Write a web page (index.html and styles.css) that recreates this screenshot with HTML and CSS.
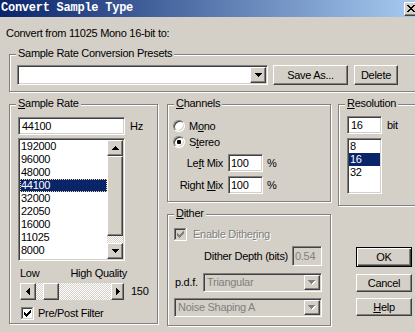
FILE: index.html
```html
<!DOCTYPE html>
<html lang="en">
<head>
<meta charset="utf-8">
<title>Convert Sample Type</title>
<link rel="stylesheet" href="styles.css">
</head>
<body>
<div class="window">
  <div class="titlebar">
    <span class="title">Convert Sample Type</span>
    <span class="close raised"><svg width="8" height="7" viewBox="0 0 8 7"><path fill="#000" d="M0 0h2v1H0zM6 0h2v1H6zM1 1h2v1H1zM5 1h2v1H5zM2 2h4v1H2zM3 3h2v1H3zM2 4h4v1H2zM1 5h2v1H1zM5 5h2v1H5zM0 6h2v1H0zM6 6h2v1H6z"/></svg></span>
  </div>

  <div class="intro">Convert from 11025 Mono 16-bit to:</div>

  <fieldset class="group presets">
    <legend>Sample Rate Conversion Presets</legend>
    <div class="gbody presets-body">
      <div class="combo sunken preset-combo">
        <span class="combo-val"></span>
        <span class="drop raised"><svg width="7" height="4" viewBox="0 0 7 4"><path fill="#000" d="M0 0h7v1H0zM1 1h5v1H1zM2 2h3v1H2zM3 3h1v1H3z"/></svg></span>
      </div>
      <div class="btn raised save">Save As...</div>
      <div class="btn raised del">Delete</div>
    </div>
  </fieldset>

  <div class="lower">
    <fieldset class="group rate">
      <legend><u>S</u>ample Rate</legend>
      <div class="gbody">
        <div class="edit-row">
          <div class="edit sunken rate-edit">44100</div>
          <span class="unit">Hz</span>
        </div>
        <div class="list sunken rate-list">
          <div class="items">
            <div class="item">192000</div>
            <div class="item">96000</div>
            <div class="item">48000</div>
            <div class="item sel focus">44100</div>
            <div class="item">32000</div>
            <div class="item">22050</div>
            <div class="item">16000</div>
            <div class="item">11025</div>
            <div class="item">8000</div>
            <div class="item">6000</div>
          </div>
          <div class="vscroll">
            <span class="sbtn raised"><svg width="7" height="4" viewBox="0 0 7 4"><path fill="#000" d="M3 0h1v1H3zM2 1h3v1H2zM1 2h5v1H1zM0 3h7v1H0z"/></svg></span>
            <span class="vthumb raised"></span>
            <span class="track"></span>
            <span class="sbtn raised"><svg width="7" height="4" viewBox="0 0 7 4"><path fill="#000" d="M0 0h7v1H0zM1 1h5v1H1zM2 2h3v1H2zM3 3h1v1H3z"/></svg></span>
          </div>
        </div>
        <div class="ql"><span>Low</span><span>High Quality</span></div>
        <div class="slider-row">
          <div class="hscroll">
            <span class="sbtn raised left"><svg width="4" height="7" viewBox="0 0 4 7"><path fill="#000" d="M3 0h1v7H3zM2 1h1v5H2zM1 2h1v3H1zM0 3h1v1H0z"/></svg></span>
            <span class="gap"></span>
            <span class="hthumb raised"></span>
            <span class="track"></span>
            <span class="sbtn raised right"><svg width="4" height="7" viewBox="0 0 4 7"><path fill="#000" d="M0 0h1v7H0zM1 1h1v5H1zM2 2h1v3H2zM3 3h1v1H3z"/></svg></span>
          </div>
          <span class="val">150</span>
        </div>
        <div class="chk-row">
          <svg class="chk" width="13" height="13" viewBox="0 0 13 13"><path fill="#808080" d="M0 0h12v1H1v11H0z"/><path fill="#fff" d="M12 0h1v13H0v-1h12z"/><path fill="#404040" d="M1 1h10v1H2v9H1z"/><path fill="#d4d0c8" d="M11 1h1v11H1v-1h10z"/><rect x="2" y="2" width="9" height="9" fill="#fff"/><path fill="#000" d="M9 3h1v1H9zM8 4h2v1H8zM3 5h1v1H3zM7 5h3v1H7zM3 6h2v1H3zM6 6h3v1H6zM3 7h5v1H3zM4 8h3v1H4zM5 9h1v1H5z"/></svg>
          <span class="lbl">Pre/Post Filter</span>
        </div>
      </div>
    </fieldset>

    <fieldset class="group channels">
      <legend><u>C</u>hannels</legend>
      <div class="gbody">
        <div class="radio-row"><span class="radio"></span><span class="lbl">M<u>o</u>no</span></div>
        <div class="radio-row"><span class="radio on"></span><span class="lbl">S<u>t</u>ereo</span></div>
        <div class="mix-row first">
          <span class="mix-label">Le<u>f</u>t Mix</span>
          <div class="edit sunken mix-edit">100</div>
          <span class="pct">%</span>
        </div>
        <div class="mix-row">
          <span class="mix-label">Right <u>M</u>ix</span>
          <div class="edit sunken mix-edit">100</div>
          <span class="pct">%</span>
        </div>
      </div>
    </fieldset>

    <fieldset class="group resolution">
      <legend><u>R</u>esolution</legend>
      <div class="gbody">
        <div class="edit-row">
          <div class="edit sunken res-edit">16</div>
          <span class="unit">bit</span>
        </div>
        <div class="list sunken res-list">
          <div class="items">
            <div class="item">8</div>
            <div class="item sel">16</div>
            <div class="item">32</div>
          </div>
        </div>
      </div>
    </fieldset>

    <fieldset class="group dither">
      <legend><u>D</u>ither</legend>
      <div class="gbody">
        <div class="chk-row">
          <svg class="chk" width="13" height="13" viewBox="0 0 13 13"><path fill="#808080" d="M0 0h12v1H1v11H0z"/><path fill="#fff" d="M12 0h1v13H0v-1h12z"/><path fill="#404040" d="M1 1h10v1H2v9H1z"/><path fill="#d4d0c8" d="M11 1h1v11H1v-1h10z"/><rect x="2" y="2" width="9" height="9" fill="#d4d0c8"/><path fill="#808080" d="M9 3h1v1H9zM8 4h2v1H8zM3 5h1v1H3zM7 5h3v1H7zM3 6h2v1H3zM6 6h3v1H6zM3 7h5v1H3zM4 8h3v1H4zM5 9h1v1H5z"/></svg>
          <span class="lbl disabled">Enable Dithe<u>r</u>ing</span>
        </div>
        <div class="depth-row">
          <span class="dl">Dither Depth (bits)</span>
          <div class="edit sunken depth-edit">0.54</div>
        </div>
        <div class="pdf-row">
          <span class="pdf-label">p.d.f.</span>
          <div class="combo sunken dis">
            <span class="combo-val">Triangular</span>
            <span class="drop raised"><svg width="8" height="5" viewBox="0 0 8 5"><path fill="#fff" d="M1 1h7v1H1zM2 2h5v1H2zM3 3h3v1H3zM4 4h1v1H4z"/><path fill="#808080" d="M0 0h7v1H0zM1 1h5v1H1zM2 2h3v1H2zM3 3h1v1H3z"/></svg></span>
          </div>
        </div>
        <div class="combo sunken dis noise">
          <span class="combo-val">Noise Shaping A</span>
          <span class="drop raised"><svg width="8" height="5" viewBox="0 0 8 5"><path fill="#fff" d="M1 1h7v1H1zM2 2h5v1H2zM3 3h3v1H3zM4 4h1v1H4z"/><path fill="#808080" d="M0 0h7v1H0zM1 1h5v1H1zM2 2h3v1H2zM3 3h1v1H3z"/></svg></span>
        </div>
      </div>
    </fieldset>

    <div class="actions">
      <div class="btn ok">OK</div>
      <div class="btn raised cancel">Cancel</div>
      <div class="btn raised help"><span><u>H</u>elp</span></div>
    </div>
  </div>
</div>
</body>
</html>
```

FILE: styles.css
```css
* { box-sizing: border-box; }
html, body { margin: 0; padding: 0; }
body {
  width: 415px;
  height: 332px;
  overflow: hidden;
  background: #d4d0c8;
  color: #000;
  font-family: "Liberation Sans", Arial, sans-serif;
  font-size: 11px;
  line-height: 13px;
  letter-spacing: -0.28px;
}
u { text-decoration: underline; text-underline-offset: 1px; }
.window { width: 415px; }

/* title bar */
.titlebar {
  display: flex;
  justify-content: space-between;
  align-items: flex-start;
  height: 17px;
  padding-left: 1px;
  background: linear-gradient(to right, #0a246a 0%, #a6caf0 100%);
}
.title {
  font-family: "Liberation Mono", monospace;
  font-weight: bold;
  font-size: 12px;
  line-height: 17px;
  letter-spacing: -0.25px;
  color: #fff;
  white-space: nowrap;
}
.close {
  flex-shrink: 0;
  width: 16px;
  height: 14px;
  margin-top: 2px;
  margin-right: -5px;
  padding: 2px 0 0 2px;
  display: flex;
}
.close svg { display: block; }

/* 3D edges */
.raised {
  background: #d4d0c8;
  border: 1px solid;
  border-color: #fff #404040 #404040 #fff;
  box-shadow: inset -1px -1px #808080, inset 1px 1px #d4d0c8;
}
.sunken {
  border: 1px solid;
  border-color: #808080 #fff #fff #808080;
  box-shadow: inset 1px 1px #404040, inset -1px -1px #d4d0c8;
  padding: 1px;
}

.intro { margin: 10px 0 0 6px; white-space: nowrap; }

/* group boxes */
.group {
  margin: 0;
  padding: 0;
  min-width: 0;
  border: 1px solid #808080;
  box-shadow: inset 1px 1px #fff, 1px 1px #fff;
}
.group > legend {
  margin-left: 6px;
  padding: 0 2px 2px;
  line-height: 13px;
  background: #d4d0c8;
  white-space: nowrap;
}

/* presets */
.presets { width: 420px; margin: 7px 0 0 9px; }
.presets-body { display: flex; padding: 3px 0 6px 7px; }
.combo { display: flex; height: 20px; background: #fff; }
.combo-val { flex: 1; padding-left: 2px; line-height: 16px; white-space: nowrap; overflow: hidden; }
.drop { flex-shrink: 0; width: 16px; display: flex; align-items: center; justify-content: center; }
.drop svg, .sbtn svg { display: block; }
.preset-combo { width: 251px; }
.btn { display: flex; align-items: center; justify-content: center; white-space: nowrap; }
.save { width: 75px; height: 20px; margin-left: 5px; }
.del { width: 44px; height: 20px; margin-left: 6px; }

/* lower area */
.lower {
  display: grid;
  grid-template-columns: 158px 171px 1fr;
  grid-template-rows: 110px auto;
  align-items: start;
  margin: 5px 0 0 9px;
}

/* sample rate */
.rate { grid-row: 1 / span 2; grid-column: 1; width: 149px; }
.rate .gbody { padding: 5px 0 3px 8px; }
.edit-row { display: flex; align-items: center; }
.edit {
  height: 18px;
  background: #fff;
  padding: 1px 1px 1px 3px;
  line-height: 14px;
  white-space: nowrap;
  overflow: hidden;
}
.rate-edit { width: 107px; }
.unit { margin-left: 5px; }
.list { display: flex; background: #fff; margin-top: 3px; }
.rate-list { width: 107px; height: 123px; }
.items { flex: 1; overflow: hidden; }
.item { height: 13px; line-height: 13px; padding-left: 1px; white-space: nowrap; }
.item.sel { background: #0a246a; color: #fff; }
.item.focus { outline: 1px dotted #f5db95; outline-offset: -1px; }
.vscroll, .hscroll {
  background: repeating-conic-gradient(#fff 0 25%, #d4d0c8 0 50%) 0 0 / 2px 2px;
}
.vscroll { width: 16px; display: flex; flex-direction: column; flex-shrink: 0; }
.sbtn { flex-shrink: 0; display: flex; align-items: center; justify-content: center; }
.vscroll .sbtn { height: 16px; }
.vthumb { height: 80px; flex-shrink: 0; }
.track { flex: 1; }
.ql { display: flex; justify-content: space-between; width: 107px; margin: 6px 0 0 2px; white-space: nowrap; }
.slider-row { display: flex; align-items: center; height: 17px; margin: 3px 0 0 2px; }
.hscroll { width: 104px; height: 17px; display: flex; }
.hscroll .left { width: 16px; }
.hscroll .gap { width: 7px; flex-shrink: 0; }
.hthumb { width: 16px; flex-shrink: 0; }
.hscroll .right { width: 13px; }
.val { margin-left: 7px; }
.chk-row { display: flex; align-items: center; height: 13px; white-space: nowrap; }
.chk { display: block; flex-shrink: 0; }
.rate .chk-row { margin: 7px 0 0 3px; }
.rate .chk-row .lbl { margin-left: 4px; }

/* channels */
.channels { grid-row: 1; grid-column: 2; width: 164px; }
.channels .gbody { padding: 8px 0 7px 5px; }
.radio-row { display: flex; align-items: center; height: 12px; line-height: 12px; }
.radio-row + .radio-row { margin-top: 4px; }
.radio {
  flex-shrink: 0;
  width: 12px;
  height: 12px;
  border-radius: 50%;
  background: #fff;
  border: 1px solid;
  border-color: #808080 #fff #fff #808080;
  box-shadow: inset 1px 1px #404040, inset -1px -1px #d4d0c8;
  display: flex;
  align-items: center;
  justify-content: center;
}
.radio.on::after { content: ""; width: 4px; height: 4px; border-radius: 1px; background: #000; }
.radio-row .lbl { margin-left: 4px; }
.mix-row { display: flex; align-items: center; height: 18px; margin-top: 4px; white-space: nowrap; }
.mix-row.first { margin-top: 6px; }
.mix-label { width: 50px; text-align: right; }
.mix-edit { width: 35px; margin-left: 5px; padding-left: 2px; }
.pct { margin-left: 4px; }

/* resolution */
.resolution { grid-row: 1; grid-column: 3; width: 90px; }
.resolution .gbody { padding: 4px 0 11px 8px; }
.res-edit { width: 35px; }
.res-list { width: 35px; height: 56px; margin-top: 4px; }

/* dither */
.dither { grid-row: 2; grid-column: 2; width: 164px; }
.dither .gbody { padding: 6px 8px 8px 6px; }
.disabled { color: #808080; text-shadow: 1px 1px 0 #fff; }
.dither .chk-row .lbl { margin-left: 6px; }
.depth-row { display: flex; justify-content: flex-end; align-items: center; height: 20px; margin-top: 5px; white-space: nowrap; }
.depth-row .dl { margin-right: 4px; }
.depth-edit { width: 30px; height: 20px; background: #d4d0c8; color: #808080; line-height: 16px; padding-left: 2px; }
.pdf-row { display: flex; align-items: center; margin-top: 7px; }
.pdf-label { width: 29px; padding-left: 1px; }
.combo.dis { height: 19px; background: #d4d0c8; color: #808080; flex: 1; }
.combo.dis .combo-val { line-height: 15px; }
.noise { margin-top: 6px; }

/* buttons */
.actions { grid-row: 2; grid-column: 3; display: flex; flex-direction: column; padding: 40px 0 0 18px; }
.actions .btn { width: 56px; }
.ok {
  height: 20px;
  background: #d4d0c8;
  border: 1px solid #000;
  box-shadow: inset 1px 1px #fff, inset -1px -1px #404040, inset -2px -2px #808080;
}
.cancel { height: 18px; margin-top: 7px; }
.help { height: 18px; margin-top: 6px; }
```
